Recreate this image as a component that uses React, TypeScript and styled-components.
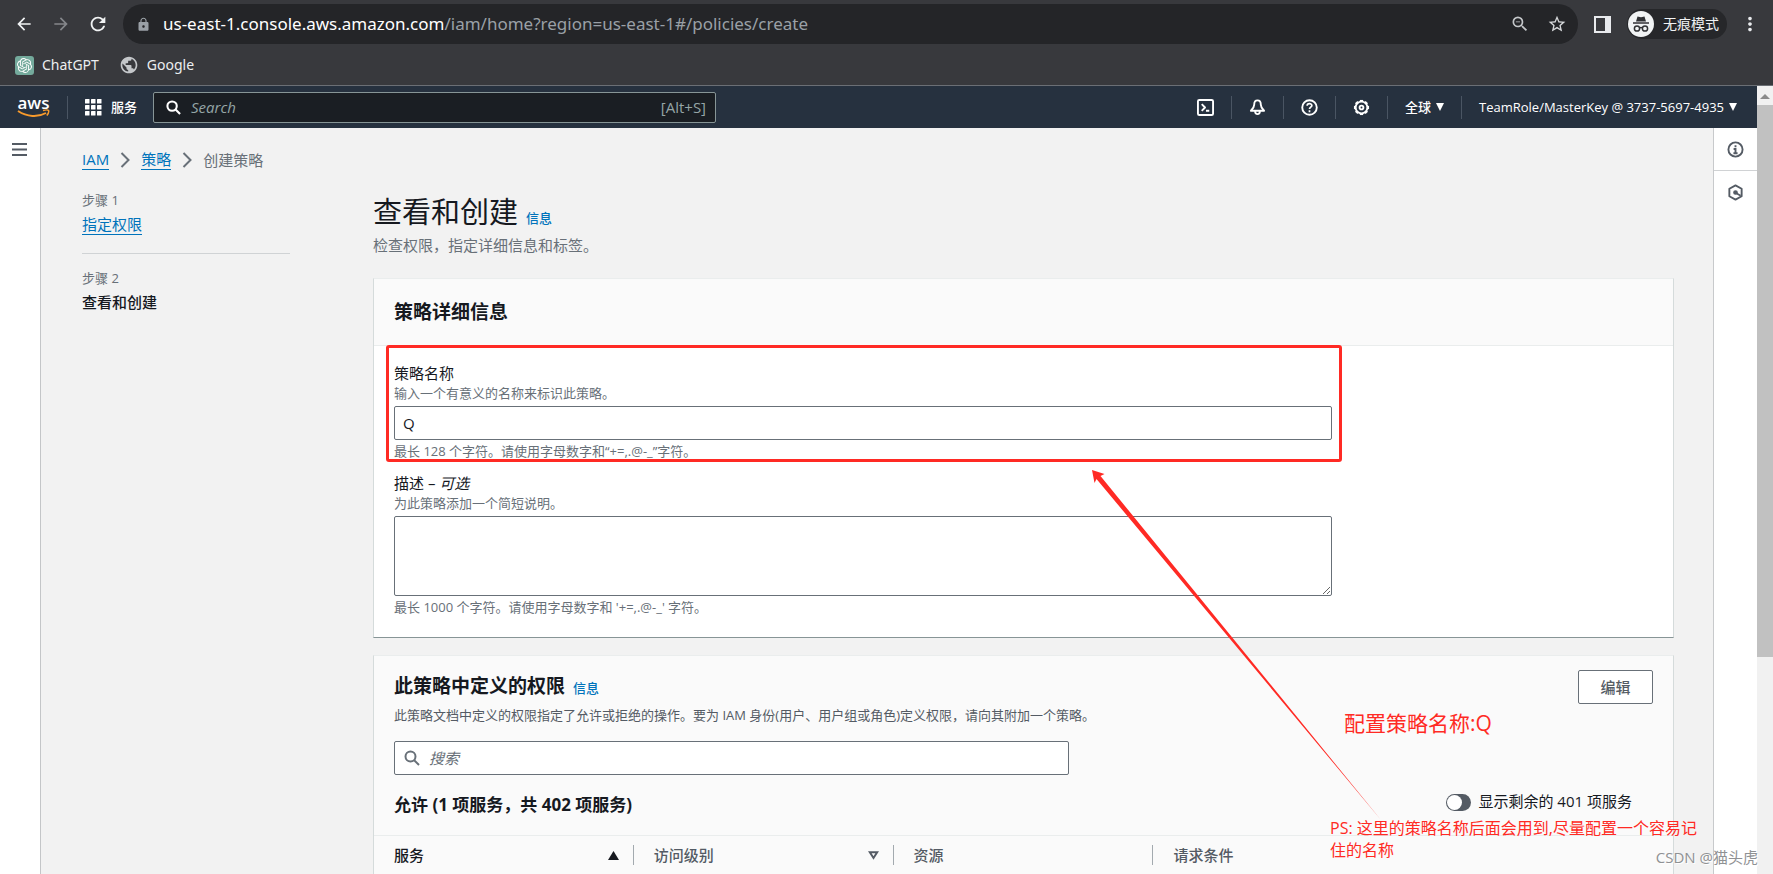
import React from 'react';
import styled, { createGlobalStyle } from 'styled-components';
import { MdArrowBack, MdArrowForward, MdRefresh, MdLock, MdPublic, MdStarBorder, MdMoreVert, MdZoomOut } from 'react-icons/md';
import { SiOpenai } from 'react-icons/si';

const red = '#ff2a24';

const GlobalStyle = createGlobalStyle`
  * { box-sizing: border-box; }
  body {
    margin: 0;
    font-family: 'Open Sans', 'Noto Sans CJK SC', sans-serif;
    font-size: 15px;
    line-height: 20px;
    color: #16191f;
  }
  button, input, textarea { font: inherit; color: inherit; }
  h1, h2, h3, p, ol, ul { margin: 0; padding: 0; }
`;

const Window = styled.div`
  position: relative;
  display: flex;
  flex-direction: column;
  height: 100vh;
  overflow: hidden;
`;

/* Browser frame */

const Chrome = styled.header`
  background: #38393d;
  border-bottom: 1px solid #6b6f75;
  color: #f1f3f4;
  font-family: 'Noto Sans', 'Noto Sans CJK SC', sans-serif;
  flex: none;
`;

const Toolbar = styled.div`
  display: flex;
  align-items: center;
  height: 48px;
  padding: 0 12px;
`;

const ToolButton = styled.button<{ $dim?: boolean }>`
  display: flex;
  align-items: center;
  justify-content: center;
  width: 24px;
  height: 24px;
  margin-right: 13px;
  padding: 0;
  border: 0;
  background: none;
  color: ${p => (p.$dim ? '#85878b' : '#f1f3f4')};
`;

const AddressBar = styled.div`
  display: flex;
  flex: 1;
  align-items: center;
  height: 40px;
  margin-right: 16px;
  padding: 0 9px 0 13px;
  border-radius: 20px;
  background: #242528;
  color: #9aa0a6;
  ${ToolButton}:last-child { margin-right: 0; }
`;

const Address = styled.span`
  flex: 1;
  margin-left: 12px;
  font-size: 17px;
  b { font-weight: 400; color: #ffffff; }
`;

const Incognito = styled.span`
  display: flex;
  align-items: center;
  gap: 9px;
  height: 30px;
  margin: 0 12px 0 16px;
  padding: 0 8px 0 1px;
  border-radius: 15px;
  background: #26272a;
  font-size: 14px;
`;

const Bookmarks = styled.nav`
  display: flex;
  gap: 20px;
  height: 37px;
  padding: 7px 15px 0;
`;

const Bookmark = styled.a`
  display: flex;
  align-items: center;
  gap: 8px;
  height: 20px;
  font-size: 14px;
  color: #eceef0;
  text-decoration: none;
`;

const GptBadge = styled.span`
  display: flex;
  align-items: center;
  justify-content: center;
  width: 19px;
  height: 19px;
  border-radius: 3px;
  background: #74aa9c;
  color: #ffffff;
`;

/* Page viewport */

const Viewport = styled.div`
  display: flex;
  flex: 1;
  min-height: 0;
`;

const Site = styled.div`
  flex: 1;
  min-width: 0;
  display: flex;
  flex-direction: column;
`;

const ScrollTrack = styled.div`
  width: 16px;
  background: #f1f1f1;
  display: flex;
  flex-direction: column;
  align-items: center;
`;

const ScrollArrow = styled.div`
  width: 0;
  height: 0;
  margin: 8px 0 6px;
  border: 5px solid transparent;
  border-top: 0;
  border-bottom: 5px solid #8b8b8b;
`;

const ScrollThumb = styled.div`
  width: 16px;
  height: 70%;
  background: #c1c1c1;
`;

/* AWS navigation */

const TopNav = styled.nav`
  display: flex;
  align-items: center;
  flex: none;
  height: 42px;
  padding: 0 20px 0 17px;
  background: #26313f;
  color: #ffffff;
  font-size: 13px;
  line-height: 18px;
`;

const Logo = styled.a`
  display: flex;
  flex-direction: column;
  align-items: center;
  width: 33px;
  color: #ffffff;
  font-size: 17px;
  font-weight: 600;
  line-height: 13px;
  text-decoration: none;
`;

const Divider = styled.i`
  width: 1px;
  height: 23px;
  margin: 0 17px;
  background: #4a5563;
`;

const NavButton = styled.button<{ $menu?: boolean }>`
  display: flex;
  align-items: center;
  gap: ${p => (p.$menu ? 5 : 8)}px;
  padding: 0;
  border: 0;
  background: none;
  font-weight: 500;
`;

const NavSearch = styled.label`
  display: flex;
  align-items: center;
  width: 563px;
  height: 31px;
  margin-left: 16px;
  padding: 0 9px 0 12px;
  border: 1px solid #879596;
  border-radius: 2px;
  background: #1a1e23;
  color: #95a5a6;
  font-size: 15px;
  input {
    flex: 1;
    min-width: 0;
    margin-left: 10px;
    padding: 0;
    border: 0;
    outline: 0;
    background: none;
    &::placeholder { color: #95a5a6; font-style: italic; opacity: 1; }
  }
`;

const NavRight = styled.div`
  display: flex;
  align-items: center;
  margin-left: auto;
`;

/* Console layout */

const Shell = styled.div`
  display: flex;
  flex: 1;
  min-height: 0;
`;

const LeftDrawer = styled.aside`
  flex: none;
  width: 41px;
  padding: 15px 0 0 12px;
  border-right: 1px solid #c4c6c8;
  background: #ffffff;
`;

const RightDrawer = styled.aside`
  flex: none;
  width: 44px;
  border-left: 1px solid #c8cacc;
  background: #ffffff;
`;

const DrawerButton = styled.button<{ $line?: boolean }>`
  display: flex;
  align-items: center;
  justify-content: center;
  width: 100%;
  height: 43px;
  padding: 0;
  border: 0;
  border-bottom: ${p => (p.$line ? '1px solid #d0d2d4' : '0')};
  background: none;
  color: #545b64;
`;

const PlainButton = styled.button`
  display: block;
  padding: 0;
  border: 0;
  background: none;
  color: #545b64;
  svg { display: block; }
`;

const Main = styled.main`
  flex: 1;
  min-width: 0;
  overflow: hidden;
  padding: 22px 39px 0 41px;
  background: #f2f2f2;
`;

const Crumbs = styled.ol`
  display: flex;
  align-items: center;
  gap: 11px;
  margin-bottom: 21px;
  color: #687078;
  list-style: none;
  li { display: flex; align-items: center; gap: 11px; }
`;

const Link = styled.a`
  display: inline-block;
  border-bottom: 1px solid #0073bb;
  color: #0073bb;
  line-height: 19px;
  text-decoration: none;
`;

const Columns = styled.div`
  display: grid;
  grid-template-columns: 208px minmax(0, 1fr);
  column-gap: 83px;
`;

const Steps = styled.ol`
  list-style: none;
`;

const Step = styled.li<{ $current?: boolean }>`
  padding-bottom: 18px;
  font-weight: ${p => (p.$current ? 500 : 400)};
  & + & { padding-top: 15px; border-top: 1px solid #d0d3d5; }
  small {
    display: block;
    margin-bottom: 5px;
    font-size: 13px;
    font-weight: 400;
    line-height: 18px;
    color: #687078;
  }
`;

const Title = styled.h1`
  font-size: 29px;
  font-weight: 400;
  line-height: 42px;
`;

const InfoLink = styled.a`
  margin-left: 8px;
  color: #0073bb;
  font-size: 13px;
  font-weight: 500;
  line-height: 16px;
  text-decoration: none;
`;

const Subtitle = styled.p`
  margin-bottom: 21px;
  line-height: 24px;
  color: #687078;
`;

const Panel = styled.section<{ $shade?: boolean }>`
  margin-bottom: 17px;
  border: 1px solid #d5dbdb;
  border-top-color: #eaeded;
  border-bottom-color: #879596;
  background: ${p => (p.$shade ? '#fafafa' : '#ffffff')};
`;

const PanelHead = styled.div`
  padding: 20px;
  border-bottom: 1px solid #eaeded;
  background: #fafafa;
`;

const Heading = styled.h2`
  font-size: 19px;
  font-weight: 700;
  line-height: 26px;
`;

const Form = styled.form`
  padding: 17px 20px 20px;
`;

const Field = styled.div`
  max-width: 938px;
  & + & { margin-top: 12px; }
  label { display: block; }
`;

const Hint = styled.p`
  font-size: 13px;
  color: #687078;
`;

const control = `
  display: block;
  width: 100%;
  margin: 3px 0 1px;
  padding: 0 8px;
  border: 1px solid #687078;
  border-radius: 2px;
  background: #ffffff;
  outline: 0;
`;

const TextInput = styled.input`
  ${control}
  height: 34px;
`;

const TextArea = styled.textarea`
  ${control}
  height: 80px;
  resize: vertical;
`;

const PermHead = styled.div`
  display: flex;
  align-items: flex-start;
  justify-content: space-between;
  padding: 14px 20px 0 20px;
`;

const PermTitle = styled.div`
  padding-top: 3px;
  ${Hint} { margin-top: 5px; line-height: 22px; color: #545b64; }
`;

const EditButton = styled.button`
  width: 75px;
  height: 34px;
  padding: 0;
  border: 1px solid #687078;
  border-radius: 2px;
  background: #ffffff;
  color: #545b64;
  font-weight: 500;
`;

const SearchBox = styled.label`
  display: flex;
  align-items: center;
  gap: 9px;
  max-width: 675px;
  height: 34px;
  margin: 15px 20px 17px;
  padding: 0 9px;
  border: 1px solid #687078;
  border-radius: 2px;
  background: #ffffff;
  color: #687078;
  input {
    flex: 1;
    padding: 0;
    border: 0;
    outline: 0;
    background: none;
    &::placeholder { color: #687078; font-style: italic; opacity: 1; }
  }
`;

const AllowRow = styled.div`
  display: flex;
  justify-content: space-between;
  padding: 0 41px 17px 20px;
  h3 { font-size: 17px; line-height: 26px; }
`;

const Toggle = styled.label`
  display: flex;
  align-items: center;
  gap: 7px;
  height: 18px;
  input {
    appearance: none;
    display: flex;
    align-items: center;
    width: 25px;
    height: 17px;
    margin: 3px 0 0;
    padding: 1px;
    border-radius: 9px;
    background: #545b64;
    &::before { content: ''; width: 15px; height: 15px; border-radius: 8px; background: #ffffff; }
    &:checked { justify-content: flex-end; background: #0073bb; }
  }
`;

const Table = styled.table`
  width: 100%;
  border-collapse: collapse;
  table-layout: fixed;
  border-top: 1px solid #eaeded;
`;

const Th = styled.th<{ $active?: boolean; $wide?: boolean }>`
  width: ${p => (p.$wide ? '40%' : '20%')};
  padding: 9px 0 9px;
  font-weight: 500;
  text-align: left;
  color: ${p => (p.$active ? '#16191f' : '#545b64')};
  > div {
    display: flex;
    align-items: center;
    justify-content: space-between;
    height: 20px;
    padding: 0 14px 0 20px;
    border-right: ${p => (p.$wide ? '0' : '1px solid #a3aaaf')};
  }
`;

/* Notes over the page */

const Notes = styled.div`
  position: absolute;
  inset: 0;
  pointer-events: none;
  color: ${red};
`;

const NoteFrame = styled.div`
  position: absolute;
  left: 386px;
  top: 345px;
  width: 956px;
  height: 117px;
  border: 3px solid ${red};
  border-radius: 3px;
`;

const Arrow = styled.svg`
  position: absolute;
  left: 1092px;
  top: 470px;
`;

const Note = styled.p<{ $x: number; $y: number; $size: number }>`
  position: absolute;
  left: ${p => p.$x}px;
  top: ${p => p.$y}px;
  width: 374px;
  font-size: ${p => p.$size}px;
  line-height: 22px;
`;

const Watermark = styled.p`
  position: absolute;
  right: 15px;
  bottom: 6px;
  font-size: 15px;
  line-height: 22px;
  color: #8f9193;
  text-shadow: 1px 1px 0 #ffffff;
`;

const Magnifier = () => (
  <svg width="16" height="16" viewBox="0 0 16 16" fill="none" stroke="currentColor" strokeWidth="2" aria-hidden="true">
    <circle cx="6.5" cy="6.5" r="5" />
    <path d="M10.2 10.2 15 15" />
  </svg>
);

const Chevron = () => (
  <svg width="10" height="16" viewBox="0 0 10 16" fill="none" stroke="#687078" strokeWidth="2" aria-hidden="true">
    <path d="M1.5 1 8.5 8l-7 7" />
  </svg>
);

const Caret = () => (
  <svg width="8" height="8" viewBox="0 0 8 8" fill="currentColor" aria-hidden="true">
    <path d="M0 0h8L4 8z" />
  </svg>
);

const line = { width: 17, height: 17, viewBox: '0 0 18 18', fill: 'none', stroke: 'currentColor', strokeWidth: 2, strokeLinejoin: 'round' as const };

const gear = Array.from({ length: 8 }, (_, i) => i * 45);

const SideAndProfile = () => (
  <>
    <svg width="17" height="17" viewBox="0 0 17 17" aria-hidden="true"><rect x="1" y="1" width="15" height="15" fill="none" stroke="#e8eaed" strokeWidth="2" /><path d="M11 1h5v15h-5z" fill="#e8eaed" /></svg>
    <Incognito>
      <svg width="26" height="26" viewBox="0 0 26 26" fill="none" stroke="#303134" strokeWidth="1.5" aria-hidden="true">
        <circle cx="13" cy="13" r="13" fill="#f1f3f4" stroke="none" />
        <path d="m9.5 5.5 3.5.7 3.5-.7 1.500 5H8z" fill="#303134" stroke="none" />
        <path d="M5 12h16M11.500 17c1-.8 2-.8 3 0" />
        <circle cx="9" cy="17.5" r="2.6" /><circle cx="17" cy="17.5" r="2.6" />
      </svg>
      无痕模式
    </Incognito>
    <MdMoreVert size={22} color="#e8eaed" />
  </>
);

export default function App() {
  return (
    <Window>
      <GlobalStyle />
      <Chrome>
        <Toolbar>
          <ToolButton aria-label="后退"><MdArrowBack size={20} /></ToolButton>
          <ToolButton $dim aria-label="前进"><MdArrowForward size={20} /></ToolButton>
          <ToolButton aria-label="刷新"><MdRefresh size={22} /></ToolButton>
          <AddressBar>
            <MdLock size={15} />
            <Address><b>us-east-1.console.aws.amazon.com</b>/iam/home?region=us-east-1#/policies/create</Address>
            <ToolButton aria-label="缩放"><MdZoomOut size={20} color="#c4c7ca" /></ToolButton>
            <ToolButton aria-label="收藏"><MdStarBorder size={20} color="#d6d8da" /></ToolButton>
          </AddressBar>
          <SideAndProfile />
        </Toolbar>
        <Bookmarks>
          <Bookmark href="#chatgpt"><GptBadge><SiOpenai size={15} /></GptBadge>ChatGPT</Bookmark>
          <Bookmark href="#google"><MdPublic size={20} color="#c4c7ca" />Google</Bookmark>
        </Bookmarks>
      </Chrome>

      <Viewport>
        <Site>
          <TopNav>
            <Logo href="#aws" aria-label="aws">
              aws
              <svg width="33" height="9" viewBox="0 0 33 9" fill="none" stroke="#f79a2c" strokeWidth="2" aria-hidden="true">
                <path d="M1 2c9 6 20 6.5 28 2" />
                <path d="M26 1.5c3-.8 5-.8 5.5 0s-.2 3-1.7 5" strokeWidth="1.5" />
              </svg>
            </Logo>
            <Divider />
            <NavButton>
              <svg width="18" height="18" viewBox="0 0 18 18" fill="currentColor" aria-hidden="true">
                {[0, 6, 12].map(y => [0, 6, 12].map(x => <rect key={`${x}-${y}`} x={x} y={y + 1} width="4.5" height="4.5" rx=".5" />))}
              </svg>
              服务
            </NavButton>
            <NavSearch>
              <svg width="15" height="15" viewBox="0 0 16 16" fill="none" stroke="#ffffff" strokeWidth="2.2" aria-hidden="true">
                <circle cx="6.5" cy="6.5" r="5" /><path d="M10.2 10.2 15 15" />
              </svg>
              <input type="search" placeholder="Search" aria-label="Search" />
              <span>[Alt+S]</span>
            </NavSearch>
            <NavRight>
              <NavButton aria-label="CloudShell">
                <svg {...line}><rect x="1" y="1" width="16" height="16" rx="1.5" /><path d="m5 5.5 3.5 3.5L5 12.5M9.5 12.5H13" /></svg>
              </NavButton>
              <Divider />
              <NavButton aria-label="通知">
                <svg {...line}><path d="M9 1.5c-2.5 0-3.5 2-3.5 4.5S4.5 9.5 2 12.5h14C13.5 9.5 12.5 8.5 12.5 6S11.5 1.5 9 1.5zM6.5 13c0 4 5 4 5 0" /></svg>
              </NavButton>
              <Divider />
              <NavButton aria-label="帮助">
                <svg {...line}><circle cx="9" cy="9" r="7.7" /><path d="M6.5 7.2C6.5 4.2 11.5 4.2 11.5 7c0 1.6-2.5 1.7-2.5 3.6M9 12v2" strokeWidth="1.8" /></svg>
              </NavButton>
              <Divider />
              <NavButton aria-label="设置">
                <svg {...line}>
                  <circle cx="9" cy="9" r="6.2" /><circle cx="9" cy="9" r="2" />
                  {gear.map(a => <path key={a} d="M9 3V1" strokeWidth="3.5" transform={`rotate(${a} 9 9)`} />)}
                </svg>
              </NavButton>
              <Divider />
              <NavButton $menu>全球 <Caret /></NavButton>
              <Divider />
              <NavButton $menu>TeamRole/MasterKey @ 3737-5697-4935 <Caret /></NavButton>
            </NavRight>
          </TopNav>

          <Shell>
            <LeftDrawer>
              <PlainButton aria-label="菜单">
                <svg width="15" height="13" viewBox="0 0 15 13" stroke="currentColor" strokeWidth="2" aria-hidden="true"><path d="M0 1h15M0 6.5h15M0 12h15" /></svg>
              </PlainButton>
            </LeftDrawer>

            <Main>
              <Crumbs>
                <li><Link href="#iam">IAM</Link><Chevron /></li>
                <li><Link href="#policies">策略</Link><Chevron /></li>
                <li>创建策略</li>
              </Crumbs>
              <Columns>
                <Steps>
                  <Step><small>步骤 1</small><Link href="#permissions">指定权限</Link></Step>
                  <Step $current><small>步骤 2</small>查看和创建</Step>
                </Steps>
                <div>
                  <Title>查看和创建<InfoLink href="#info">信息</InfoLink></Title>
                  <Subtitle>检查权限，指定详细信息和标签。</Subtitle>

                  <Panel>
                    <PanelHead><Heading>策略详细信息</Heading></PanelHead>
                    <Form>
                      <Field>
                        <label htmlFor="name">策略名称</label>
                        <Hint>输入一个有意义的名称来标识此策略。</Hint>
                        <TextInput id="name" defaultValue="Q" />
                        <Hint>最长 128 个字符。请使用字母数字和“+=,.@-_”字符。</Hint>
                      </Field>
                      <Field>
                        <label htmlFor="description">描述 – <em>可选</em></label>
                        <Hint>为此策略添加一个简短说明。</Hint>
                        <TextArea id="description" />
                        <Hint>最长 1000 个字符。请使用字母数字和 '+=,.@-_' 字符。</Hint>
                      </Field>
                    </Form>
                  </Panel>

                  <Panel $shade>
                    <PermHead>
                      <PermTitle>
                        <Heading>此策略中定义的权限<InfoLink href="#info">信息</InfoLink></Heading>
                        <Hint>此策略文档中定义的权限指定了允许或拒绝的操作。要为 IAM 身份(用户、用户组或角色)定义权限，请向其附加一个策略。</Hint>
                      </PermTitle>
                      <EditButton>编辑</EditButton>
                    </PermHead>
                    <SearchBox>
                      <Magnifier />
                      <input type="search" placeholder="搜索" aria-label="搜索" />
                    </SearchBox>
                    <AllowRow>
                      <h3>允许 (1 项服务，共 402 项服务)</h3>
                      <Toggle><input type="checkbox" role="switch" />显示剩余的 401 项服务</Toggle>
                    </AllowRow>
                    <Table>
                      <thead>
                        <tr>
                          <Th $active><div>服务<svg width="11" height="9" viewBox="0 0 11 9" fill="#16191f"><path d="M5.5 0 11 9H0z" /></svg></div></Th>
                          <Th><div>访问级别<svg width="11" height="9" viewBox="0 0 11 9" fill="none" stroke="#545b64" strokeWidth="2"><path d="M1.8 1.2h7.4L5.5 7z" /></svg></div></Th>
                          <Th><div>资源</div></Th>
                          <Th $wide><div>请求条件</div></Th>
                        </tr>
                      </thead>
                    </Table>
                  </Panel>
                </div>
              </Columns>
            </Main>

            <RightDrawer>
              <DrawerButton $line aria-label="信息">
                <svg {...line}><circle cx="9" cy="9" r="7.5" /><path d="M9 4.5v2M7 8.5h2v4.5M6.8 13h4.4" strokeLinejoin="miter" /></svg>
              </DrawerButton>
              <DrawerButton aria-label="教程">
                <svg {...line}><path d="M9 1.5 15.5 5v8L9 16.5 2.5 13V5z" /><circle cx="9" cy="9" r="1.5" fill="currentColor" /><path d="m9.5 9.5 5 3" /></svg>
              </DrawerButton>
            </RightDrawer>
          </Shell>
        </Site>
        <ScrollTrack><ScrollArrow /><ScrollThumb /></ScrollTrack>
      </Viewport>

      <Notes>
        <NoteFrame />
        <Arrow width="290" height="352" viewBox="0 0 290 352" fill={red}>
          <path d="M0 0 12.5 4 8.5 6 289 350 4.5 9 2.5 13z" />
        </Arrow>
        <Note $x={1344} $y={712} $size={21}>配置策略名称:Q</Note>
        <Note $x={1330} $y={817} $size={16}>PS: 这里的策略名称后面会用到,尽量配置一个容易记住的名称</Note>
        <Watermark>CSDN @猫头虎</Watermark>
      </Notes>
    </Window>
  );
}
